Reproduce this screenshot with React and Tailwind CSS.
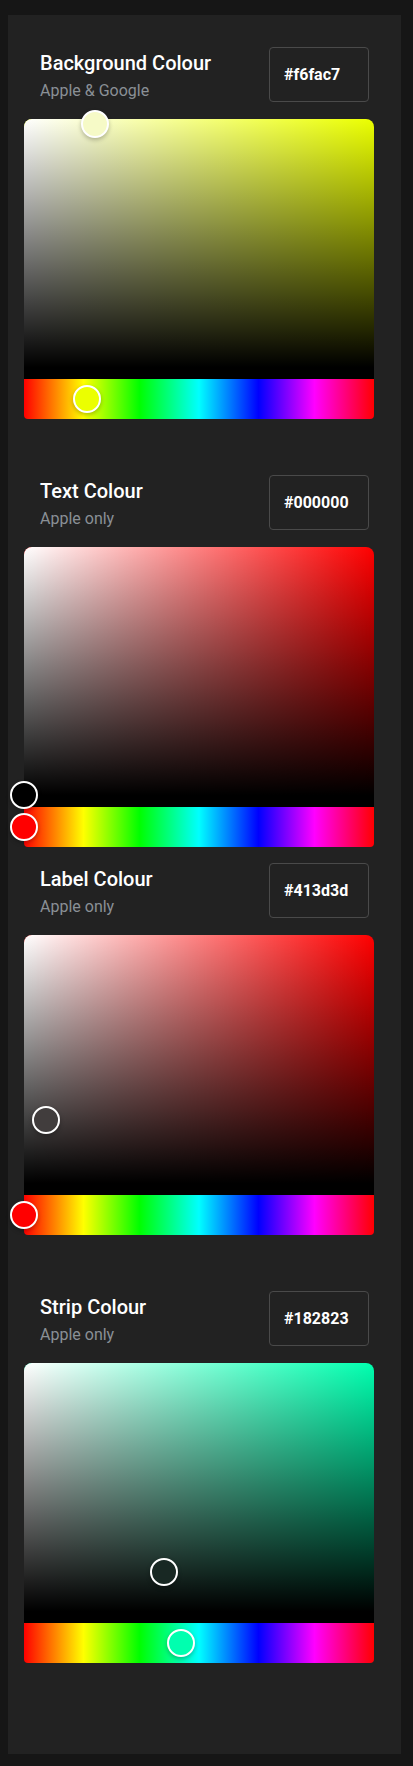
import React from "react";

const pickers = [
  { title: "Background Colour", note: "Apple & Google", hex: "#f6fac7", gap: "mb-14" },
  { title: "Text Colour", note: "Apple only", hex: "#000000", gap: "mb-4" },
  { title: "Label Colour", note: "Apple only", hex: "#413d3d", gap: "mb-14" },
  { title: "Strip Colour", note: "Apple only", hex: "#182823", gap: "" },
];

// hex -> { h: 0..360, s: 0..1, v: 0..1 }
function hexToHsv(hex) {
  const n = parseInt(hex.slice(1), 16);
  const r = ((n >> 16) & 255) / 255;
  const g = ((n >> 8) & 255) / 255;
  const b = (n & 255) / 255;
  const max = Math.max(r, g, b);
  const min = Math.min(r, g, b);
  const d = max - min;
  let h = 0;
  if (d !== 0) {
    if (max === r) h = ((g - b) / d) % 6;
    else if (max === g) h = (b - r) / d + 2;
    else h = (r - g) / d + 4;
    h *= 60;
    if (h < 0) h += 360;
  }
  return { h, s: max === 0 ? 0 : d / max, v: max };
}

function Pointer({ color, style, className = "" }) {
  return (
    <div
      className={
        "absolute w-7 h-7 -translate-x-1/2 -translate-y-1/2 rounded-full border-2 border-white shadow-[0_2px_4px_rgba(0,0,0,0.25)] " +
        className
      }
      style={{ backgroundColor: color, ...style }}
    />
  );
}

function ColourPicker({ hex }) {
  const { h, s, v } = hexToHsv(hex);
  return (
    <div className="w-[350px]">
      {/* saturation / value area */}
      <div
        className="relative h-[260px] rounded-t-[8px] border-b-[12px] border-black bg-[image:linear-gradient(to_top,#000,rgba(0,0,0,0)),linear-gradient(to_right,#fff,rgba(255,255,255,0))]"
        style={{ backgroundColor: `hsl(${h}, 100%, 50%)` }}
      >
        <Pointer
          color={hex}
          className="z-20"
          style={{ left: `${s * 100}%`, top: `${(1 - v) * 100}%` }}
        />
      </div>
      {/* hue strip */}
      <div className="relative h-10 rounded-b-[4px] bg-[image:linear-gradient(to_right,#f00_0%,#ff0_17%,#0f0_33%,#0ff_50%,#00f_67%,#f0f_83%,#f00_100%)]">
        <Pointer
          color={`hsl(${h}, 100%, 50%)`}
          className="z-10"
          style={{ left: `${(h / 360) * 100}%`, top: "50%" }}
        />
      </div>
    </div>
  );
}

function Section({ title, note, hex, gap }) {
  return (
    <div className={"w-[350px] " + gap}>
      <div className="flex items-start justify-between pl-4 pr-[5px] mb-[17px] h-[55px]">
        <div className="mt-[3px]">
          <div className="text-[20px] leading-[26px] font-medium text-white">{title}</div>
          <div className="mt-[2px] text-[16px] leading-[26px] text-[#8a9096]">{note}</div>
        </div>
        <div className="w-[100px] h-[55px] flex items-center px-[14px] rounded-[4px] border border-[#4a4a4a] text-[16px] font-bold text-white">
          {hex}
        </div>
      </div>
      <ColourPicker hex={hex} />
    </div>
  );
}

export default function App() {
  return (
    <div className="min-h-[1766px] bg-[#161616] pt-[15px] pb-3 font-['Roboto','Liberation_Sans',sans-serif]">
      <div className="ml-2 w-[393px] bg-[#222222] pt-8 pl-4 pb-[91px]">
        {pickers.map((p) => (
          <Section key={p.title} {...p} />
        ))}
      </div>
    </div>
  );
}
